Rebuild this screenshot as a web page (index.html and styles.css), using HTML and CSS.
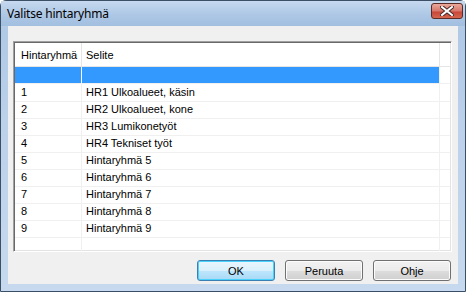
FILE: index.html
```html
<!DOCTYPE html>
<html lang="fi">
<head>
    <meta charset="UTF-8">
    <title>Valitse hintaryhmä</title>
    <link rel="stylesheet" href="styles.css">
</head>
<body>
    <div class="window">
        <div class="titlebar">
            <span class="title">Valitse hintaryhmä</span>
            <button class="close" type="button">
                <svg width="14" height="10" viewBox="0 0 14 10">
                    <path d="M2 1 L12 9 M12 1 L2 9" stroke="#4a2a2a" stroke-width="4" stroke-linecap="square"/>
                    <path d="M2 1 L12 9 M12 1 L2 9" stroke="#fff" stroke-width="2" stroke-linecap="square"/>
                </svg>
            </button>
        </div>

        <div class="client">
            <div class="listbox">
                <div class="row header">
                    <div class="cell">Hintaryhmä</div>
                    <div class="cell">Selite</div>
                    <div class="cell"></div>
                </div>
                <div class="row selected">
                    <div class="cell"></div>
                    <div class="cell"></div>
                    <div class="cell"></div>
                </div>
                <div class="row"><div class="cell">1</div><div class="cell">HR1 Ulkoalueet, käsin</div><div class="cell"></div></div>
                <div class="row"><div class="cell">2</div><div class="cell">HR2 Ulkoalueet, kone</div><div class="cell"></div></div>
                <div class="row"><div class="cell">3</div><div class="cell">HR3 Lumikonetyöt</div><div class="cell"></div></div>
                <div class="row"><div class="cell">4</div><div class="cell">HR4 Tekniset työt</div><div class="cell"></div></div>
                <div class="row"><div class="cell">5</div><div class="cell">Hintaryhmä 5</div><div class="cell"></div></div>
                <div class="row"><div class="cell">6</div><div class="cell">Hintaryhmä 6</div><div class="cell"></div></div>
                <div class="row"><div class="cell">7</div><div class="cell">Hintaryhmä 7</div><div class="cell"></div></div>
                <div class="row"><div class="cell">8</div><div class="cell">Hintaryhmä 8</div><div class="cell"></div></div>
                <div class="row"><div class="cell">9</div><div class="cell">Hintaryhmä 9</div><div class="cell"></div></div>
                <div class="row filler"><div class="cell"></div><div class="cell"></div><div class="cell"></div></div>
            </div>

            <div class="buttons">
                <button class="btn default" type="button">OK</button>
                <button class="btn" type="button">Peruuta</button>
                <button class="btn" type="button">Ohje</button>
            </div>
        </div>
    </div>
</body>
</html>
```

FILE: styles.css
```css
html, body {
    margin: 0;
    padding: 0;
}
body {
    width: 466px;
    height: 292px;
    overflow: hidden;
    background: #fff;
}
.window {
    box-sizing: border-box;
    width: 466px;
    height: 292px;
    border: 1px solid #3b4f66;
    border-radius: 6px 6px 0 0;
    background: linear-gradient(#c5d8ee, #b0c9e5 30px, #bcd1ea 120px, #c6d9ee);
    display: flex;
    flex-direction: column;
}
.titlebar {
    height: 25px;
    display: flex;
    justify-content: space-between;
    align-items: flex-start;
    padding: 0 2px 0 6px;
    background: linear-gradient(#c6d9ef, #adc7e5 14px, #a2bfe0 25px);
}
.title {
    font-family: "Noto Sans", sans-serif;
    font-size: 12px;
    letter-spacing: -0.2px;
    line-height: 25px;
    color: #000;
}
.close {
    width: 32px;
    height: 16px;
    margin-top: 2px;
    padding: 0;
    border: 1px solid #5d2b26;
    border-radius: 3px;
    background: linear-gradient(#e9a99b, #d7776a 7px, #c8473a 8px, #d4664f);
    display: flex;
    align-items: center;
    justify-content: center;
}
.client {
    flex: 1;
    margin: 0 7px 7px 7px;
    background: #f0f0f0;
    padding: 15px 6px 0 5px;
}
.listbox {
    box-sizing: border-box;
    height: 211px;
    background: #fff;
    border: 1px solid;
    border-color: #a0a0a0 #fff #fff #a0a0a0;
    box-shadow: inset 1px 1px 0 #696969, inset -1px -1px 0 #e3e3e3;
    padding: 1px;
    overflow: hidden;
    font-family: "Liberation Sans", Arial, sans-serif;
    font-size: 11px;
    color: #000;
}
.row {
    display: grid;
    grid-template-columns: 67px 358px 1fr;
    height: 17px;
}
.cell {
    box-sizing: border-box;
    border-right: 1px solid #f0f0f0;
    border-bottom: 1px solid #f0f0f0;
    padding-left: 6px;
    line-height: 17px;
    white-space: nowrap;
}
.row .cell:nth-child(2) {
    padding-left: 4px;
}
.row .cell:last-child {
    border-right: none;
}
.header {
    height: 24px;
}
.header .cell {
    border-right-color: #e5e5e5;
    border-bottom-color: #e5e5e5;
    padding-top: 2px;
    line-height: 20px;
}
.selected .cell:nth-child(1),
.selected .cell:nth-child(2) {
    background: #3399ff;
}
.selected .cell:nth-child(1) {
    border-right-color: #fff;
}
.filler {
    height: 20px;
}
.filler .cell {
    border-bottom: none;
}
.buttons {
    display: flex;
    justify-content: flex-end;
    gap: 10px;
    margin-top: 8px;
    padding-right: 1px;
}
.btn {
    width: 78px;
    height: 21px;
    padding: 0;
    border: 1px solid #707070;
    border-radius: 3px;
    background: linear-gradient(#f2f2f2, #ebebeb 50%, #dddddd 51%, #cfcfcf);
    box-shadow: inset 0 0 0 1px #fcfcfc;
    font-family: "Liberation Sans", Arial, sans-serif;
    font-size: 11px;
    color: #000;
}
.btn.default {
    border-color: #3c7fb1;
    background: linear-gradient(#eaf6fd, #d9f0fc 50%, #bee6fd 51%, #a7d9f5);
    box-shadow: inset 0 0 0 1px #48d2fb;
}
```
